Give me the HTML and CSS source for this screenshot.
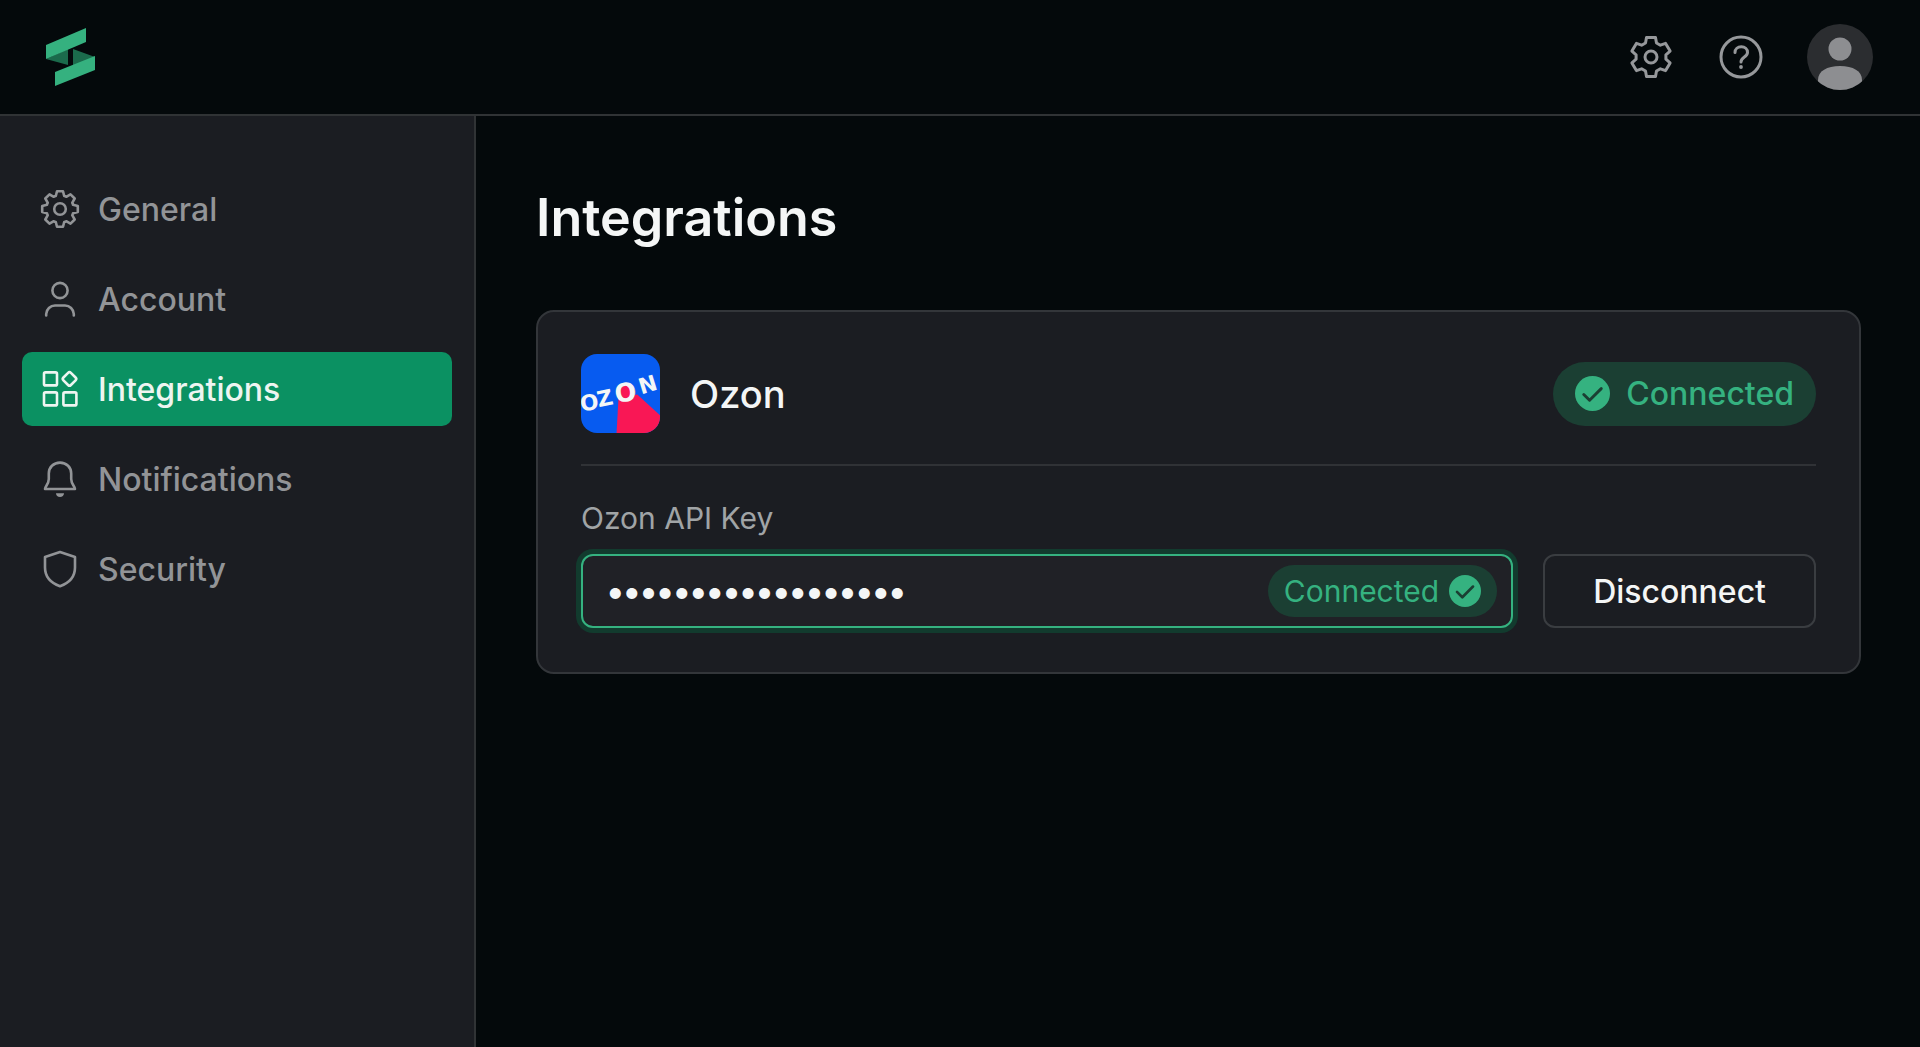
FILE: index.html
```html
<!DOCTYPE html>
<html lang="en">
<head>
  <meta charset="UTF-8">
  <meta name="viewport" content="width=device-width, initial-scale=1.0">
  <title>Integrations</title>
  <link rel="stylesheet" href="styles.css">
</head>
<body>

  <header class="topbar">
    <a href="#" class="logo" aria-label="Home">
      <svg width="49" height="58" viewBox="0 0 49 58">
        <path fill="#1b6b4c" d="M0 31 22 21V37Z"/>
        <path fill="#1b6b4c" d="M27 21 49 29 27 39Z"/>
        <path fill="#35b17f" d="M0 17 40 0V14L0 31Z"/>
        <path fill="#35b17f" d="M9 44 49 28V42L9 58Z"/>
      </svg>
    </a>
    <div class="topbar-actions">
      <button type="button" class="icon-button" aria-label="Settings">
        <svg class="icon" width="48" height="48" viewBox="0 0 48 48">
          <path d="M19.5 4.5H28.5L29.5 10L33.4 12.2L38.6 10.4L43.1 18.1L38.9 21.8V26.2L43.1 29.9L38.6 37.6L33.4 35.8L29.5 38L28.5 43.5H19.5L18.5 38L14.6 35.8L9.4 37.6L4.9 29.9L9.1 26.2V21.8L4.9 18.1L9.4 10.4L14.6 12.2L18.5 10Z"/>
          <circle cx="24" cy="24" r="6"/>
        </svg>
      </button>
      <button type="button" class="icon-button" aria-label="Help">
        <svg class="icon" width="48" height="48" viewBox="0 0 48 48">
          <circle cx="24" cy="24" r="20"/>
          <path d="M18 19.5C18 16 20.7 13.8 24.3 13.8S30.5 16.2 30.5 19.4C30.5 24 24 24 24 29"/>
          <circle class="dot" cx="24" cy="34" r="1.9"/>
        </svg>
      </button>
      <button type="button" class="icon-button" aria-label="Profile">
        <svg width="66" height="66" viewBox="0 0 66 66">
          <clipPath id="avatar"><circle cx="33" cy="33" r="33"/></clipPath>
          <g clip-path="url(#avatar)">
            <rect width="66" height="66" fill="#2b2d30"/>
            <circle cx="33" cy="25" r="11.5" fill="#8d8e91"/>
            <path fill="#8d8e91" d="M11 56C11 47 20 42 33 42S55 47 55 56V66H11Z"/>
          </g>
        </svg>
      </button>
    </div>
  </header>

  <div class="layout">
    <nav class="sidebar">
      <a href="#" class="nav-item">
        <svg class="icon" width="40" height="40" viewBox="0 0 40 40">
          <path d="M17 2.2H23L24.2 7Q25.3 7.1 26.2 7.8L30.5 5.3L34.7 9.5L32.2 13.8Q32.9 14.7 33 15.8L37.8 17V23L33 24.2Q32.9 25.3 32.2 26.2L34.7 30.5L30.5 34.7L26.2 32.2Q25.3 32.9 24.2 33L23 37.8H17L15.8 33Q14.7 32.9 13.8 32.2L9.5 34.7L5.3 30.5L7.8 26.2Q7.1 25.3 7 24.2L2.2 23V17L7 15.8Q7.1 14.7 7.8 13.8L5.3 9.5L9.5 5.3L13.8 7.8Q14.7 7.1 15.8 7Z"/>
          <circle cx="20" cy="20" r="5.8"/>
        </svg>
        General
      </a>
      <a href="#" class="nav-item">
        <svg class="icon" width="40" height="40" viewBox="0 0 40 40">
          <circle cx="20" cy="11.5" r="7.6"/>
          <path d="M6.2 36.5V35A9 9 0 0 1 15 26.5H25A9 9 0 0 1 33.8 35V36.5"/>
        </svg>
        Account
      </a>
      <a href="#" class="nav-item active" aria-current="page">
        <svg class="icon" width="40" height="40" viewBox="0 0 40 40">
          <rect x="4" y="3.4" width="13" height="13" rx="1.5"/>
          <rect x="24.2" y="4.6" width="10.6" height="10.6" rx="2" transform="rotate(45 29.5 9.9)"/>
          <rect x="4" y="23.4" width="13" height="13" rx="1.5"/>
          <rect x="23.4" y="23.4" width="13" height="13" rx="1.5"/>
        </svg>
        Integrations
      </a>
      <a href="#" class="nav-item">
        <svg class="icon" width="40" height="40" viewBox="0 0 40 40">
          <path d="M20 3.6C13.5 3.6 8.8 8.4 8.8 14.6V20C8.8 25 5 27.5 5 30H35C35 27.5 31.2 25 31.2 20V14.6C31.2 8.4 26.5 3.6 20 3.6Z"/>
          <path class="dot" d="M16 34.2H24C24 36.6 22.3 38 20 38S16 36.6 16 34.2Z"/>
        </svg>
        Notifications
      </a>
      <a href="#" class="nav-item">
        <svg class="icon" width="40" height="40" viewBox="0 0 40 40">
          <path d="M20 3 35 8V18.5C35 27.5 29 34 20 37.2C11 34 5 27.5 5 18.5V8Z"/>
        </svg>
        Security
      </a>
    </nav>

    <main class="content">
      <h1>Integrations</h1>

      <section class="card">
        <div class="card-header">
          <svg class="brand-logo" width="79" height="79" viewBox="0 0 80 80" aria-hidden="true">
            <rect width="80" height="80" fill="#075bf0"/>
            <path fill="#f91755" d="M38 44 36 80H80V62L57 41Z"/>
            <ellipse cx="46" cy="39" rx="9" ry="8" fill="#f91755"/>
            <text class="brand-text" x="0 18 35 61" y="58 54 49 41" rotate="-7 -12 -6 -17">OZ<tspan class="brand-big">O</tspan>N</text>
          </svg>
          <h2>Ozon</h2>
          <span class="badge">
            <svg class="check" width="35" height="35" viewBox="0 0 36 36">
              <circle cx="18" cy="18" r="18"/>
              <path d="M9 19 15 25 27 13"/>
            </svg>
            Connected
          </span>
        </div>

        <form class="key-form">
          <label for="apiKey">Ozon API Key</label>
          <div class="key-row">
            <div class="key-field">
              <input type="password" id="apiKey" value="ozon-api-key-00001" autocomplete="off">
              <span class="badge badge-small">
                Connected
                <svg class="check" width="32" height="32" viewBox="0 0 36 36">
                  <circle cx="18" cy="18" r="18"/>
                  <path d="M9 19 15 25 27 13"/>
                </svg>
              </span>
            </div>
            <button type="button" class="disconnect">Disconnect</button>
          </div>
        </form>
      </section>
    </main>
  </div>

</body>
</html>
```
FILE: styles.css
```css
* {
  box-sizing: border-box;
}

body {
  display: flex;
  flex-direction: column;
  min-height: 100vh;
  margin: 0;
  background-color: #04090b;
  color: #f4f6f6;
  font-family: Inter, sans-serif;
  font-size: 32px;
}

button, input {
  font-family: inherit;
  font-size: inherit;
  color: inherit;
}

svg {
  display: block;
  flex-shrink: 0;
}

.icon {
  fill: none;
  stroke: currentColor;
  stroke-width: 2.6;
  stroke-linecap: round;
  stroke-linejoin: round;
}

.icon .dot {
  fill: currentColor;
  stroke: none;
}

/* Top bar */
.topbar {
  display: flex;
  align-items: center;
  justify-content: space-between;
  height: 116px;
  padding: 0 47px 0 46px;
  border-bottom: 2px solid #303335;
}

.topbar-actions {
  display: flex;
  align-items: center;
  gap: 42px;
}

.icon-button {
  padding: 0;
  border: none;
  background: none;
  color: #96989b;
  cursor: pointer;
}

.icon-button .icon {
  stroke-width: 3;
}

/* Sidebar */
.layout {
  display: flex;
  flex: 1;
}

.sidebar {
  display: flex;
  flex-direction: column;
  flex-shrink: 0;
  gap: 16px;
  width: 476px;
  padding: 56px 22px;
  border-right: 2px solid #303335;
  background-color: #1b1d22;
}

.nav-item {
  display: flex;
  align-items: center;
  gap: 18px;
  height: 74px;
  padding: 0 18px;
  border-radius: 10px;
  color: #929497;
  font-weight: 500;
  text-decoration: none;
}

.nav-item.active {
  background-color: #0b9162;
  color: #eef5f1;
}

/* Content */
.content {
  flex: 1;
  padding: 70px 59px 60px 60px;
}

h1 {
  margin: 0 0 60px;
  font-size: 52px;
  font-weight: 600;
  line-height: 64px;
}

.card {
  padding: 42px 43px 44px;
  border: 2px solid #33363a;
  border-radius: 18px;
  background-color: #1b1d22;
}

.card-header {
  display: flex;
  align-items: center;
  gap: 30px;
  padding-bottom: 31px;
  border-bottom: 2px solid #303236;
}

.brand-logo {
  border-radius: 16px;
}

.brand-text {
  fill: #f4f6f6;
  font-family: "DejaVu Sans", sans-serif;
  font-size: 22px;
  font-weight: bold;
}

.brand-big {
  font-size: 26px;
}

h2 {
  flex: 1;
  margin: 0;
  font-size: 38px;
  font-weight: 500;
}

.badge {
  display: flex;
  align-items: center;
  gap: 16px;
  height: 64px;
  padding: 0 22px;
  border-radius: 32px;
  background-color: #1b3f33;
  color: #35b280;
  font-weight: 500;
}

.check circle {
  fill: #35b280;
}

.check path {
  fill: none;
  stroke: #1b3f33;
  stroke-width: 3;
  stroke-linecap: round;
  stroke-linejoin: round;
}

/* API key form */
.key-form {
  padding-top: 32px;
}

.key-form label {
  display: block;
  margin-bottom: 16px;
  color: #a0a4a6;
  font-size: 30px;
  line-height: 40px;
}

.key-row {
  display: flex;
  gap: 30px;
}

.key-field {
  display: flex;
  flex: 1;
  align-items: center;
  height: 74px;
  padding-right: 14px;
  border: 2px solid #35b280;
  border-radius: 12px;
  background-color: #202126;
  box-shadow: 0 0 0 5px #123b2e;
}

.key-field input {
  flex: 1;
  min-width: 0;
  height: 100%;
  padding: 0 24px;
  border: none;
  outline: none;
  background: none;
  font-size: 35px;
  font-weight: 700;
}

.badge-small {
  gap: 10px;
  height: 52px;
  padding: 0 16px;
  font-size: 30px;
  font-weight: 400;
}

.disconnect {
  height: 74px;
  padding: 0 48px;
  border: 2px solid #3a3d41;
  border-radius: 12px;
  background-color: #1b1d22;
  font-weight: 500;
  cursor: pointer;
}
```
